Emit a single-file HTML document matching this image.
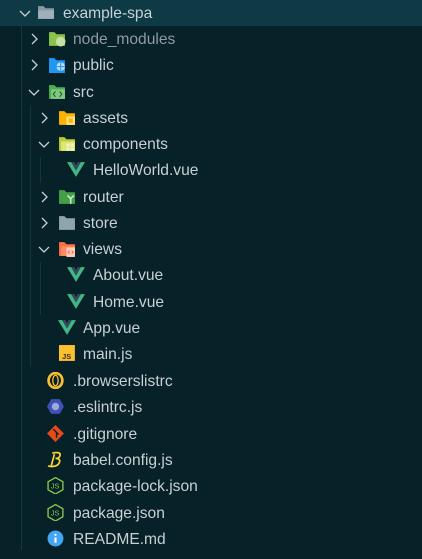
<!DOCTYPE html>
<html><head><style>
body{margin:0;width:422px;height:559px;background:#072129;overflow:hidden;font-family:"Liberation Sans",sans-serif;font-size:15.6px;color:#c8d0d4;position:relative}
.r{position:absolute;left:0;width:422px;height:26px;line-height:27px}
.sel{background:#0d3a44}
.t{position:absolute;top:0;white-space:nowrap}
.ch{position:absolute;top:7px;width:12px;height:12px}
.ic{position:absolute;top:4px;width:18px;height:17px}
.g{position:absolute;width:1px;background:#18353d}
</style></head><body>
<div class="g" style="left:21px;top:26px;height:524px"></div>
<div class="g" style="left:30px;top:105px;height:262px"></div>
<div class="g" style="left:40px;top:157px;height:26px"></div>
<div class="g" style="left:40px;top:262px;height:53px"></div>

<div class="r sel" style="top:0"><svg class="ch" style="left:19px" viewBox="0 0 12 12"><path d="M1 4l5 5 5-5" stroke="#c8d0d4" fill="none" stroke-width="1.3"/></svg>
<svg class="ic" style="left:37px" viewBox="0 0 17 16"><path d="M1 2h5l2 2h8v10H1z" fill="#8a9aa2"/><path d="M1 6h15v8H1z" fill="#9fb0b8"/></svg><span class="t" style="left:63px">example-spa</span></div>

<div class="r" style="top:26px"><svg class="ch" style="left:28px" viewBox="0 0 12 12"><path d="M4 1l5 5-5 5" stroke="#c8d0d4" fill="none" stroke-width="1.3"/></svg>
<svg class="ic" style="left:48px" viewBox="0 0 17 16"><path d="M1 2h5l2 2h8v11H1z" fill="#8bc34a"/><circle cx="12" cy="11" r="4.5" fill="#c5e1a5"/></svg><span class="t" style="left:73px;color:#8f9ba1">node_modules</span></div>

<div class="r" style="top:52px"><svg class="ch" style="left:28px" viewBox="0 0 12 12"><path d="M4 1l5 5-5 5" stroke="#c8d0d4" fill="none" stroke-width="1.3"/></svg>
<svg class="ic" style="left:48px" viewBox="0 0 17 16"><path d="M1 2h5l2 2h8v12H1z" fill="#2196f3"/><circle cx="12" cy="10" r="4" fill="#bbdefb"/><path d="M8 10h8M12 6v8" stroke="#2196f3"/></svg><span class="t" style="left:73px">public</span></div>

<div class="r" style="top:79px"><svg class="ch" style="left:28px" viewBox="0 0 12 12"><path d="M1 4l5 5 5-5" stroke="#c8d0d4" fill="none" stroke-width="1.3"/></svg>
<svg class="ic" style="left:48px" viewBox="0 0 17 16"><path d="M1 2h5l2 2h8v11H1z" fill="#4caf50"/><path d="M3 6h13v9H3z" fill="#81c784"/><path d="M7 8l-2 2.5 2 2.5M11 8l2 2.5-2 2.5" stroke="#1b5e20" fill="none"/></svg><span class="t" style="left:73px">src</span></div>

<div class="r" style="top:105px"><svg class="ch" style="left:38px" viewBox="0 0 12 12"><path d="M4 1l5 5-5 5" stroke="#c8d0d4" fill="none" stroke-width="1.3"/></svg>
<svg class="ic" style="left:58px" viewBox="0 0 17 16"><path d="M1 2h5l2 2h8v11H1z" fill="#ffb300"/><rect x="8" y="7" width="8" height="8" fill="#ffe082"/><rect x="10" y="9" width="4" height="4" fill="#ffb300"/></svg><span class="t" style="left:83px">assets</span></div>

<div class="r" style="top:131px"><svg class="ch" style="left:38px" viewBox="0 0 12 12"><path d="M1 4l5 5 5-5" stroke="#c8d0d4" fill="none" stroke-width="1.3"/></svg>
<svg class="ic" style="left:58px" viewBox="0 0 17 16"><path d="M1 2h5l2 2h8v11H1z" fill="#c0ca33"/><path d="M3 6h13v9H3z" fill="#dce775"/><rect x="8" y="8" width="3" height="3" fill="#f0f4c3"/><rect x="12" y="8" width="3" height="3" fill="#f0f4c3"/><rect x="8" y="12" width="3" height="3" fill="#f0f4c3"/><rect x="12" y="12" width="3" height="3" fill="#f0f4c3"/></svg><span class="t" style="left:83px">components</span></div>

<div class="r" style="top:157px"><svg class="ic" style="left:67px" viewBox="0 0 17 16"><path d="M0 1h4l4.5 8 4.5-8h4L8.5 15z" fill="#41b883"/><path d="M4 1h3l1.5 3 1.5-3h3l-4.5 8z" fill="#35495e"/></svg><span class="t" style="left:93px">HelloWorld.vue</span></div>

<div class="r" style="top:184px"><svg class="ch" style="left:38px" viewBox="0 0 12 12"><path d="M4 1l5 5-5 5" stroke="#c8d0d4" fill="none" stroke-width="1.3"/></svg>
<svg class="ic" style="left:58px" viewBox="0 0 17 16"><path d="M1 2h5l2 2h8v11H1z" fill="#43a047"/><path d="M9 7l3 3 3-3M12 10v5" stroke="#c8e6c9" fill="none" stroke-width="1.5"/></svg><span class="t" style="left:83px">router</span></div>

<div class="r" style="top:210px"><svg class="ch" style="left:38px" viewBox="0 0 12 12"><path d="M4 1l5 5-5 5" stroke="#c8d0d4" fill="none" stroke-width="1.3"/></svg>
<svg class="ic" style="left:58px" viewBox="0 0 17 16"><path d="M1 2h5l2 2h8v11H1z" fill="#90a4ae"/></svg><span class="t" style="left:83px">store</span></div>

<div class="r" style="top:236px"><svg class="ch" style="left:38px" viewBox="0 0 12 12"><path d="M1 4l5 5 5-5" stroke="#c8d0d4" fill="none" stroke-width="1.3"/></svg>
<svg class="ic" style="left:58px" viewBox="0 0 17 16"><path d="M1 2h5l2 2h8v11H1z" fill="#ff7043"/><path d="M3 6h13v9H3z" fill="#ff8a65"/><rect x="8" y="7" width="8" height="9" fill="#ffccbc"/><path d="M11 10l-1.5 1.5 1.5 1.5M13 10l1.5 1.5-1.5 1.5" stroke="#ff7043" fill="none"/></svg><span class="t" style="left:83px">views</span></div>

<div class="r" style="top:262px"><svg class="ic" style="left:67px" viewBox="0 0 17 16"><path d="M0 1h4l4.5 8 4.5-8h4L8.5 15z" fill="#41b883"/><path d="M4 1h3l1.5 3 1.5-3h3l-4.5 8z" fill="#35495e"/></svg><span class="t" style="left:93px">About.vue</span></div>
<div class="r" style="top:289px"><svg class="ic" style="left:67px" viewBox="0 0 17 16"><path d="M0 1h4l4.5 8 4.5-8h4L8.5 15z" fill="#41b883"/><path d="M4 1h3l1.5 3 1.5-3h3l-4.5 8z" fill="#35495e"/></svg><span class="t" style="left:93px">Home.vue</span></div>
<div class="r" style="top:315px"><svg class="ic" style="left:58px" viewBox="0 0 17 16"><path d="M0 1h4l4.5 8 4.5-8h4L8.5 15z" fill="#41b883"/><path d="M4 1h3l1.5 3 1.5-3h3l-4.5 8z" fill="#35495e"/></svg><span class="t" style="left:83px">App.vue</span></div>

<div class="r" style="top:341px"><svg class="ic" style="left:59px" viewBox="0 0 17 16"><rect x="0" y="0" width="15" height="15" fill="#fbc02d"/><text x="3" y="13" font-size="7" font-family="Liberation Sans" font-weight="bold" fill="#3e2723">JS</text></svg><span class="t" style="left:83px">main.js</span></div>

<div class="r" style="top:368px"><svg class="ic" style="left:47px" viewBox="0 0 17 16"><ellipse cx="8" cy="8" rx="6.5" ry="7" fill="none" stroke="#fbc02d" stroke-width="2.5"/><ellipse cx="8" cy="8" rx="2.5" ry="5" fill="none" stroke="#fbc02d" stroke-width="1.2"/></svg><span class="t" style="left:73px">.browserslistrc</span></div>

<div class="r" style="top:394px"><svg class="ic" style="left:47px" viewBox="0 0 17 16"><path d="M4 1h8l4 7-4 7H4L0 8z" fill="#3f51b5"/><circle cx="8" cy="8" r="3.5" fill="#9fa8da"/></svg><span class="t" style="left:73px">.eslintrc.js</span></div>

<div class="r" style="top:421px"><svg class="ic" style="left:47px" viewBox="0 0 17 16"><path d="M8 0l8 8-8 8-8-8z" fill="#e64a19"/><path d="M6 4l3 3v5M9 7l2 2" stroke="#072129" stroke-width="1.3" fill="none"/></svg><span class="t" style="left:73px">.gitignore</span></div>

<div class="r" style="top:447px"><svg class="ic" style="left:47px" viewBox="0 0 17 16"><path d="M5 2c4-1 9-1 7 3-1 2-4 2-4 2 4 0 5 2 3 5-2 3-8 3-10 2M7 3L4 14" stroke="#fdd835" stroke-width="1.6" fill="none"/></svg><span class="t" style="left:73px">babel.config.js</span></div>

<div class="r" style="top:473px"><svg class="ic" style="left:47px" viewBox="0 0 17 16"><path d="M8 0.5l7 4v7.5l-7 4-7-4V4.5z" fill="none" stroke="#8bc34a" stroke-width="1.3"/><text x="3.5" y="11" font-size="7" font-family="Liberation Sans" fill="#8bc34a">JS</text></svg><span class="t" style="left:73px">package-lock.json</span></div>
<div class="r" style="top:500px"><svg class="ic" style="left:47px" viewBox="0 0 17 16"><path d="M8 0.5l7 4v7.5l-7 4-7-4V4.5z" fill="none" stroke="#8bc34a" stroke-width="1.3"/><text x="3.5" y="11" font-size="7" font-family="Liberation Sans" fill="#8bc34a">JS</text></svg><span class="t" style="left:73px">package.json</span></div>

<div class="r" style="top:526px"><svg class="ic" style="left:47px" viewBox="0 0 17 16"><circle cx="8" cy="8" r="7.5" fill="#42a5f5"/><rect x="7" y="7" width="2" height="5" fill="#fff"/><circle cx="8" cy="4.5" r="1.1" fill="#fff"/></svg><span class="t" style="left:73px">README.md</span></div>
</body></html>
